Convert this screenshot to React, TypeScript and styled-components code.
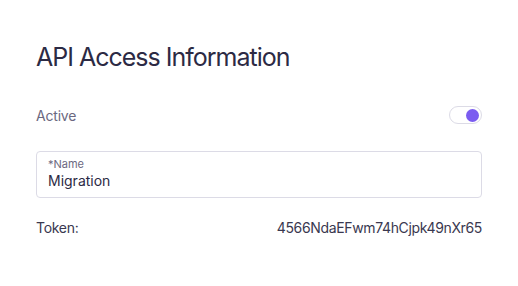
import { useState } from "react";
import styled, { createGlobalStyle } from "styled-components";

const GlobalStyle = createGlobalStyle`
  html, body {
    margin: 0;
    padding: 0;
    background: #ffffff;
  }
  body {
    font-family: Inter, "Open Sans", sans-serif;
    -webkit-font-smoothing: antialiased;
  }
`;

const App = () => {
  const [active, setActive] = useState(true);
  const [name, setName] = useState("Migration");

  return (
    <>
      <GlobalStyle />
      <Panel>
        <Title>API Access Information</Title>
        <Row>
          <RowLabel>Active</RowLabel>
          <Switch
            type="button"
            role="switch"
            aria-checked={active}
            $on={active}
            onClick={() => setActive(!active)}
          >
            <Knob $on={active} />
          </Switch>
        </Row>
        <Field>
          <FieldLabel htmlFor="api-name">*Name</FieldLabel>
          <FieldInput
            id="api-name"
            value={name}
            onChange={(e) => setName(e.target.value)}
          />
        </Field>
        <Row>
          <TokenLabel>Token:</TokenLabel>
          <TokenValue>4566NdaEFwm74hCjpk49nXr65</TokenValue>
        </Row>
      </Panel>
    </>
  );
};

export default App;

const Panel = styled.div`
  width: 446px;
  padding: 40px 36px;
  display: flex;
  flex-direction: column;
`;

const Title = styled.h1`
  margin: 0 0 31px;
  font-size: 25px;
  font-weight: 400;
  line-height: 34px;
  letter-spacing: -1px;
  color: #2c2a44;
`;

const Row = styled.div`
  display: flex;
  align-items: center;
  justify-content: space-between;
  min-height: 20px;
`;

const RowLabel = styled.span`
  font-size: 14px;
  letter-spacing: -0.2px;
  color: #6b6880;
`;

const Switch = styled.button<{ $on: boolean }>`
  width: 33px;
  height: 18px;
  padding: 0 2px;
  border-radius: 9px;
  border: 1px solid #dcdbe6;
  background: #ffffff;
  display: flex;
  align-items: center;
  justify-content: ${({ $on }) => ($on ? "flex-end" : "flex-start")};
  cursor: pointer;
`;

const Knob = styled.span<{ $on: boolean }>`
  width: 13px;
  height: 13px;
  border-radius: 50%;
  background: ${({ $on }) => ($on ? "#7b5cf0" : "#c9c8d4")};
`;

const Field = styled.div`
  margin: 26px 0 19px;
  height: 47px;
  box-sizing: border-box;
  border: 1px solid #dcdbe6;
  border-radius: 4px;
  padding: 5px 11px 0;
  display: flex;
  flex-direction: column;
`;

const FieldLabel = styled.label`
  font-size: 11px;
  line-height: 14px;
  color: #6b6880;
`;

const FieldInput = styled.input`
  border: none;
  outline: none;
  padding: 0;
  margin: 0;
  font-family: inherit;
  font-size: 14px;
  line-height: 20px;
  color: #2c2a44;
  background: transparent;
`;

const TokenLabel = styled.span`
  font-size: 14px;
  letter-spacing: -0.3px;
  color: #3a3850;
`;

const TokenValue = styled.span`
  font-size: 14px;
  letter-spacing: -0.35px;
  color: #3a3850;
`;
